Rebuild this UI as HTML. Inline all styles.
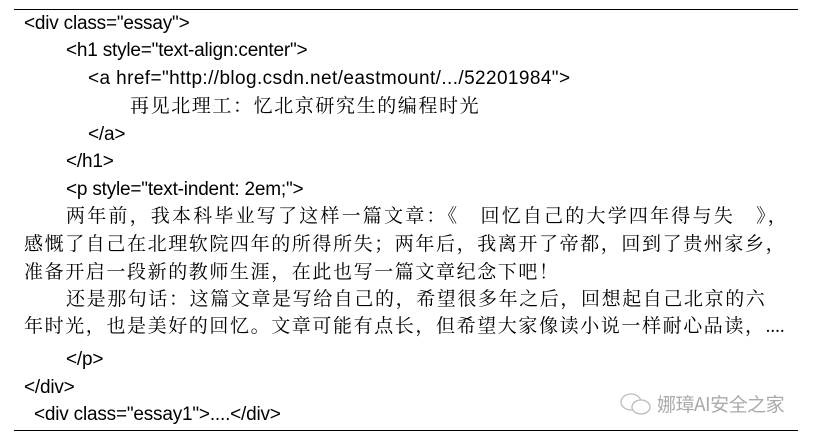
<!DOCTYPE html>
<html><head><meta charset="utf-8"><style>
body{margin:0;width:821px;height:442px;background:#fff;position:relative;overflow:hidden}
.l{position:absolute;white-space:nowrap;font-family:"Liberation Sans",sans-serif;font-size:19px;color:#000;line-height:22px;letter-spacing:-0.2px}
.c{font-family:"Liberation Serif","Noto Serif CJK SC",serif;font-size:19px;letter-spacing:1.6px}
.hr{position:absolute;left:14px;width:784px;height:1px;background:#000}
</style></head><body>
<div class="hr" style="top:9px"></div>
<div class="l" style="left:24px;top:13px">&lt;div class="essay"&gt;</div>
<div class="l" style="left:66px;top:40px">&lt;h1 style="text-align:center"&gt;</div>
<div class="l" style="left:88px;top:68px;letter-spacing:0.4px">&lt;a href="http://blog.csdn.net/eastmount/.../52201984"&gt;</div>
<div class="l c" style="left:130px;top:96px">再见北理工：忆北京研究生的编程时光</div>
<div class="l" style="left:88px;top:124px">&lt;/a&gt;</div>
<div class="l" style="left:66px;top:151px">&lt;/h1&gt;</div>
<div class="l" style="left:66px;top:179px">&lt;p style="text-indent: 2em;"&gt;</div>
<div class="l c" style="left:66px;top:206px;letter-spacing:2.2px">两年前，我本科毕业写了这样一篇文章：《　回忆自己的大学四年得与失　》，</div>
<div class="l c" style="left:24px;top:234px">感慨了自己在北理软院四年的所得所失；两年后，我离开了帝都，回到了贵州家乡，</div>
<div class="l c" style="left:24px;top:262px">准备开启一段新的教师生涯，在此也写一篇文章纪念下吧！</div>
<div class="l c" style="left:66px;top:289px">还是那句话：这篇文章是写给自己的，希望很多年之后，回想起自己北京的六</div>
<div class="l c" style="left:24px;top:316px">年时光，也是美好的回忆。文章可能有点长，但希望大家像读小说一样耐心品读，<span style="letter-spacing:0">....</span></div>
<div class="l" style="left:66px;top:349px">&lt;/p&gt;</div>
<div class="l" style="left:24px;top:377px">&lt;/div&gt;</div>
<div class="l" style="left:34px;top:404px">&lt;div class="essay1"&gt;....&lt;/div&gt;</div>
<svg style="position:absolute;left:618px;top:392px" width="38" height="26" viewBox="0 0 38 26"><g fill="none" stroke="#bbb" stroke-width="1.3"><ellipse cx="13" cy="10" rx="10" ry="8"/><ellipse cx="23" cy="15" rx="9" ry="7" fill="#fff"/></g></svg>
<div class="l" style="left:657px;top:393px;font-family:'Noto Sans CJK SC',sans-serif;font-size:19px;color:#aaa;letter-spacing:-0.5px">娜璋AI安全之家</div>
<div class="hr" style="top:430px"></div>
</body></html>
